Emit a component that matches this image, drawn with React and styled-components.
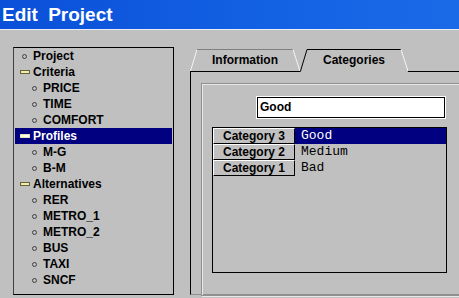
import React from 'react';
import styled, { createGlobalStyle } from 'styled-components';

const GlobalStyle = createGlobalStyle`
  html, body {
    margin: 0;
    padding: 0;
    background: #c0c0c0;
  }
  body {
    font-family: "Liberation Sans", Arial, sans-serif;
  }
`;

const Page = styled.div`
  width: 459px;
  height: 298px;
  overflow: hidden;
  background: #c0c0c0;
`;

const TitleBar = styled.div`
  height: 29px;
  line-height: 29px;
  padding-left: 2px;
  background: linear-gradient(to right, #0a50d8, #1462e4 60%, #1a6ae8);
  border-bottom: 1px solid #e8eef8;
  color: #fff;
  font-size: 19px;
  font-weight: bold;
  word-spacing: 5px;
`;

const Body = styled.div`
  display: flex;
  padding: 17px 0 0 13px;
`;

const Tree = styled.ul`
  flex-shrink: 0;
  width: 159px;
  height: 246px;
  margin: 0;
  padding: 0;
  list-style: none;
  border: 1px solid #000;
  border-left-color: #404040;
`;

const Row = styled.li`
  display: flex;
  align-items: center;
  height: 16px;
  margin: 0 1px;
  padding-left: ${p => (p.$level ? 10 : 0)}px;
  font-size: 12px;
  font-weight: bold;
  color: ${p => (p.$selected ? '#fff' : '#000')};
  background: ${p => (p.$selected ? '#000080' : 'transparent')};
`;

const IconBox = styled.span`
  width: 18px;
  height: 16px;
  display: flex;
  align-items: center;
  justify-content: center;
`;

const Bullet = styled.span`
  width: 3px;
  height: 3px;
  border: 1px solid #404040;
  border-radius: 50%;
  background: #c0c0c0;
`;

const Dash = styled.span`
  width: 8px;
  height: 2px;
  border: 1px solid ${p => (p.$light ? '#e0e0c0' : '#606040')};
  background: ${p => (p.$light ? '#ffffe0' : '#f0f0a0')};
  margin-left: 2px;
`;

const RightSide = styled.div`
  flex-shrink: 0;
  margin-left: 16px;
  padding-top: 2px;
  width: 280px;
`;

const TabStrip = styled.div`
  display: flex;
  height: 22px;
`;

const Tab = styled.div`
  position: relative;
  width: ${p => p.$width}px;
  height: ${p => (p.$active ? 23 : 22)}px;
  margin-bottom: ${p => (p.$active ? -1 : 0)}px;
  z-index: ${p => (p.$active ? 2 : 1)};
  display: flex;
  align-items: center;
  justify-content: center;
  font-size: 12px;
  font-weight: bold;
  padding-bottom: ${p => (p.$active ? 1 : 0)}px;
  box-sizing: border-box;
`;

const TabShape = styled.svg`
  position: absolute;
  inset: 0;
  width: 100%;
  height: 100%;
`;

const TabLabel = styled.span`
  position: relative;
`;

const Panel = styled.div`
  height: 211px;
  border-top: 1px solid #000;
  border-left: 1px solid #000;
  border-bottom: 1px solid #909090;
  padding: 11px 0 0 10px;
`;

const GroupBox = styled.div`
  width: 254px;
  height: 198px;
  border: 1px solid #909090;
  box-shadow: inset 1px 1px 0 #e8e8e8, 1px 1px 0 #e8e8e8;
  padding: 13px 0 0 10px;
  box-sizing: content-box;
`;

const TextInput = styled.div`
  margin-left: 45px;
  width: 184px;
  height: 19px;
  border: 1px solid #000;
  outline: 1px solid #fff;
  background: #fff;
  padding-left: 2px;
  font-size: 12px;
  font-weight: bold;
  line-height: 19px;
`;

const Grid = styled.div`
  margin-top: 9px;
  width: 233px;
  height: 144px;
  border: 1px solid #000;
`;

const GridRow = styled.div`
  display: flex;
  height: 16px;
`;

const HeadCell = styled.div`
  width: 80px;
  height: 14px;
  border-top: 1px solid #fff;
  border-left: 1px solid #fff;
  border-right: 1px solid #000;
  border-bottom: 1px solid #000;
  display: flex;
  align-items: center;
  justify-content: center;
  font-size: 12px;
  font-weight: bold;
`;

const ValueCell = styled.div`
  flex: 1;
  height: 16px;
  line-height: 16px;
  padding-left: 6px;
  font-family: "Liberation Mono", "Courier New", monospace;
  font-size: 13px;
  color: ${p => (p.$selected ? '#fff' : '#000')};
  background: ${p => (p.$selected ? '#000080' : 'transparent')};
`;

const tree = [
  { label: 'Project', level: 0, icon: 'dot' },
  { label: 'Criteria', level: 0, icon: 'dash' },
  { label: 'PRICE', level: 1, icon: 'dot' },
  { label: 'TIME', level: 1, icon: 'dot' },
  { label: 'COMFORT', level: 1, icon: 'dot' },
  { label: 'Profiles', level: 0, icon: 'dash', selected: true },
  { label: 'M-G', level: 1, icon: 'dot' },
  { label: 'B-M', level: 1, icon: 'dot' },
  { label: 'Alternatives', level: 0, icon: 'dash' },
  { label: 'RER', level: 1, icon: 'dot' },
  { label: 'METRO_1', level: 1, icon: 'dot' },
  { label: 'METRO_2', level: 1, icon: 'dot' },
  { label: 'BUS', level: 1, icon: 'dot' },
  { label: 'TAXI', level: 1, icon: 'dot' },
  { label: 'SNCF', level: 1, icon: 'dot' },
];

const categories = [
  { name: 'Category 3', value: 'Good', selected: true },
  { name: 'Category 2', value: 'Medium' },
  { name: 'Category 1', value: 'Bad' },
];

export default function App() {
  return (
    <Page>
      <GlobalStyle />
      <TitleBar>Edit Project</TitleBar>
      <Body>
        <Tree>
          {tree.map(item => (
            <Row key={item.label} $level={item.level} $selected={item.selected}>
              <IconBox>
                {item.icon === 'dot' ? <Bullet /> : <Dash $light={item.selected} />}
              </IconBox>
              {item.label}
            </Row>
          ))}
        </Tree>
        <RightSide>
          <TabStrip>
            <Tab $width={110}>
              <TabShape viewBox="0 0 110 22">
                <line x1="0.5" y1="22" x2="7" y2="0.5" stroke="#f4f4f4" />
                <line x1="7" y1="0.5" x2="103" y2="0.5" stroke="#808080" />
                <line x1="103" y1="0.5" x2="110" y2="22" stroke="#f4f4f4" />
              </TabShape>
              <TabLabel>Information</TabLabel>
            </Tab>
            <Tab $width={108} $active>
              <TabShape viewBox="0 0 108 23">
                <polygon points="0.5,23 7,0.5 101,0.5 108,23" fill="#c0c0c0" />
                <line x1="0.5" y1="22" x2="7" y2="0.5" stroke="#000" />
                <line x1="7" y1="0.5" x2="101" y2="0.5" stroke="#000" />
                <line x1="101" y1="0.5" x2="108" y2="22" stroke="#f4f4f4" />
              </TabShape>
              <TabLabel>Categories</TabLabel>
            </Tab>
          </TabStrip>
          <Panel>
            <GroupBox>
              <TextInput>Good</TextInput>
              <Grid>
                {categories.map(c => (
                  <GridRow key={c.name}>
                    <HeadCell>{c.name}</HeadCell>
                    <ValueCell $selected={c.selected}>{c.value}</ValueCell>
                  </GridRow>
                ))}
              </Grid>
            </GroupBox>
          </Panel>
        </RightSide>
      </Body>
    </Page>
  );
}
